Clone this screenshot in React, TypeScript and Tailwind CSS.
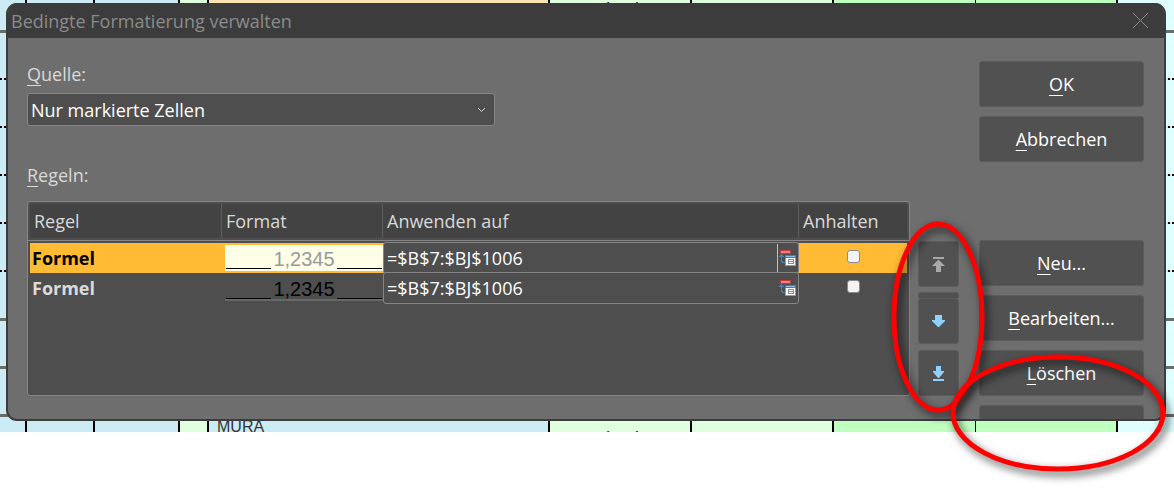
import type { ReactNode } from "react";

type RowLine = "solid" | "dotted" | "none";

interface SheetRow {
  height: string;
  line: RowLine;
  type?: string;
  amount?: string;
  name?: string;
  highlight?: boolean;
}

const sheetRows: SheetRow[] = [
  { height: "h-[33px]", line: "solid", type: "Standard", amount: "1", highlight: true },
  { height: "h-[47px]", line: "dotted" },
  { height: "h-12", line: "dotted" },
  { height: "h-12", line: "dotted" },
  { height: "h-12", line: "dotted" },
  { height: "h-12", line: "dotted" },
  { height: "h-[49px]", line: "solid" },
  { height: "h-12", line: "solid" },
  { height: "h-12", line: "solid" },
  { height: "h-[15px]", line: "none", name: "MURA", type: "Standard" },
];

const rules = [
  { id: 1, name: "Formel", preview: "1,2345", range: "=$B$7:$BJ$1006", selected: true },
  { id: 2, name: "Formel", preview: "1,2345", range: "=$B$7:$BJ$1006", selected: false },
];

const RowBorder = ({ line }: { line: RowLine }) => {
  if (line === "solid") return <div className="h-[3px] bg-[#6b6b6b]" />;
  if (line === "dotted")
    return (
      <div className="h-[2px] bg-[repeating-linear-gradient(90deg,#000_0_2px,transparent_2px_4px)]" />
    );
  return null;
};

const Sheet = () => (
  <div
    aria-hidden="true"
    className="col-start-1 row-start-1 self-start overflow-hidden bg-[#cbecf4] font-['Liberation_Sans'] text-[#333]"
  >
    {sheetRows.map((row, i) => (
      <div key={i} className={`flex flex-col overflow-hidden ${row.height}`}>
        <div className="grid min-h-0 flex-1 grid-cols-[27px_68px_85px_29px_341px_142px_142px_142px_142px_1fr]">
          <div className="border-r-2 border-black" />
          <div className="border-r-2 border-black" />
          <div className="border-r-2 border-black" />
          <div className="border-r-2 border-black bg-[#dfffdf]" />
          <div
            className={`border-r-2 border-black px-2 text-base leading-5 ${
              row.highlight ? "bg-[#fde4b0]" : ""
            }`}
          >
            {row.name}
          </div>
          <div
            className={`border-r-2 border-black bg-[#dfffdf] px-2 text-xl leading-5 ${
              row.name ? "pt-3" : ""
            }`}
          >
            {row.type}
          </div>
          <div className="border-r-2 border-black bg-[#dfffdf] px-2 text-right text-xl leading-5">
            {row.amount}
          </div>
          <div className="border-r border-black bg-[#bfffbf]" />
          <div className="border-r-2 border-black bg-[#bfffbf]" />
          <div className="bg-[#dfffff]" />
        </div>
        <RowBorder line={row.line} />
      </div>
    ))}
  </div>
);

const Mnemonic = ({ text }: { text: string }) => (
  <span>
    <span className="underline decoration-1 underline-offset-4">{text[0]}</span>
    {text.slice(1)}
  </span>
);

const DialogButton = ({ label }: { label: string }) => (
  <button
    type="button"
    className="h-[46px] w-full shrink-0 rounded-[3px] border border-[#5c5c5c] bg-[#515151] text-lg leading-6 text-white"
  >
    <Mnemonic text={label} />
  </button>
);

const MoveButton = ({ label, children }: { label: string; children: ReactNode }) => (
  <button
    type="button"
    aria-label={label}
    className="flex h-[46px] w-full shrink-0 items-center justify-center rounded-[3px] border border-[#5c5c5c] bg-[#515151]"
  >
    {children}
  </button>
);

const PickerIcon = () => (
  <svg width="17" height="17" viewBox="0 0 17 17" shapeRendering="crispEdges">
    <rect x="1" y="0" width="11" height="4" fill="#c23b40" />
    <rect x="2" y="1" width="9" height="2" fill="#f08080" />
    <path d="M2 4h1v1h1v1h1v1H3v4h1v1h2v1H3v-1H2V7H0V6h1V5h1z" fill="#3d85c0" />
    <rect x="6" y="5" width="11" height="11" fill="#979797" />
    <rect x="6" y="5" width="11" height="3" fill="#3a7fc4" />
    <rect x="7" y="6" width="9" height="1" fill="#8dbdf0" />
    <rect x="7" y="8" width="9" height="7" fill="#fff" />
    <path d="M9 9h6v5H9z" fill="#8b8b8b" />
    <path d="M10 10h4v1h-4zM10 12h4v1h-4z" fill="#fff" />
  </svg>
);

const RulesTable = () => (
  <div className="h-[195px] rounded-[3px] border border-[#858585] bg-[#4e4e4e] px-[2px] pt-[2px]">
    <table className="w-full table-fixed border-separate border-spacing-0 text-lg leading-6">
      <colgroup>
        <col className="w-[192px]" />
        <col className="w-[161px]" />
        <col />
        <col className="w-[108px]" />
      </colgroup>
      <thead>
        <tr className="h-[34px] bg-[#434343] text-left text-[#d9d9d9]">
          <th className="border-r border-[#5e5e5e] px-1 py-0 font-normal">Regel</th>
          <th className="border-r border-[#5e5e5e] px-1 py-0 font-normal">Format</th>
          <th className="border-r border-[#5e5e5e] px-1 py-0 font-normal">Anwenden auf</th>
          <th className="px-1 py-0 font-normal">Anhalten</th>
        </tr>
        <tr>
          <td colSpan={4} className="p-0">
            <div className="-mx-[2px] mt-[2px] mb-[2px] h-px bg-[#858585]" />
          </td>
        </tr>
      </thead>
      <tbody>
        {rules.map((rule) => (
          <tr
            key={rule.id}
            className={rule.selected ? "bg-[#ffbb33] text-black" : "text-[#dadada]"}
          >
            <td className="px-[2px] py-0 font-bold">{rule.name}</td>
            <td className="p-0">
              <div
                className={`ml-[3px] flex h-[26px] items-end overflow-hidden border-b-2 px-px font-['Liberation_Sans'] text-xl leading-5 ${
                  rule.selected
                    ? "border-[#ffffe8] bg-[#ffffe8] text-[#999]"
                    : "border-[#686868] text-black"
                }`}
              >
                <span className="h-px flex-1 bg-black" />
                <span className="h-5 px-[2px]">{rule.preview}</span>
                <span className="h-px flex-1 bg-black" />
              </div>
            </td>
            <td className="p-0">
              <div className="-my-px flex h-8 items-center rounded-[3px] border border-[#858585] bg-[#4e4e4e]">
                <input
                  type="text"
                  aria-label="Anwenden auf"
                  defaultValue={rule.range}
                  className="h-full min-w-0 flex-1 bg-transparent px-[3px] text-white outline-none"
                />
                <button
                  type="button"
                  aria-label="Bereich verkleinern"
                  className={`flex h-7 items-center border-l pl-px pr-[2px] ${
                    rule.selected ? "border-[#ffbb33]" : "border-transparent"
                  }`}
                >
                  <PickerIcon />
                </button>
              </div>
            </td>
            <td className="p-0">
              <div className="flex h-[30px] items-center justify-center pb-[3px]">
                <input
                  type="checkbox"
                  aria-label="Anhalten"
                  className="size-[13px] appearance-none rounded-[3px] border border-[#8a8a8a] bg-[#f4f4f4] checked:bg-[#3a7fc4]"
                />
              </div>
            </td>
          </tr>
        ))}
      </tbody>
    </table>
  </div>
);

const Dialog = () => (
  <section
    role="dialog"
    aria-labelledby="dialog-title"
    className="z-10 col-start-1 row-start-1 mt-[3px] mr-2 ml-[6px] self-start overflow-hidden rounded-[11px] border-x-2 border-b-2 border-[#3c3c3c] bg-[#6e6e6e] text-lg leading-6"
  >
    <header className="flex h-[35px] items-center justify-between bg-[#3c3c3c] pr-4 pl-[3px] text-[#8b8b8b]">
      <h1 id="dialog-title">Bedingte Formatierung verwalten</h1>
      <button type="button" aria-label="Schließen">
        <svg width="15" height="15" viewBox="0 0 15 15" fill="none" stroke="#8b8b8b">
          <path d="M0 0l15 15M15 0L0 15" />
        </svg>
      </button>
    </header>

    <div className="flex pr-5 pl-[19px]">
      <div className="flex min-w-0 flex-1 flex-col pt-6">
        <label htmlFor="source" className="text-[#d9d9d9]">
          <Mnemonic text="Quelle:" />
        </label>
        <div className="mt-[7px] grid w-[468px]">
          <select
            id="source"
            className="col-start-1 row-start-1 h-[33px] appearance-none rounded-[3px] border border-[#858585] bg-[#4e4e4e] px-[3px] text-white"
          >
            <option>Nur markierte Zellen</option>
          </select>
          <svg
            className="pointer-events-none col-start-1 row-start-1 mr-[9px] self-center justify-self-end"
            width="9"
            height="6"
            viewBox="0 0 9 6"
            fill="none"
            stroke="#d9d9d9"
          >
            <path d="M1 1l3.5 3.5L8 1" />
          </svg>
        </div>
        <h2 className="mt-[37px] mb-[14px] text-[#d9d9d9]">
          <Mnemonic text="Regeln:" />
        </h2>
        <RulesTable />
      </div>

      <div className="ml-2 flex w-[41px] flex-col justify-end pb-[23px]">
        <MoveButton label="Ganz nach oben">
          <svg width="13" height="15" viewBox="0 0 13 15" fill="#a9a9a9">
            <path d="M1 0h11v2H1zM6 3h1l6 6H9v6H4V9H0z" />
          </svg>
        </MoveButton>
        <button
          type="button"
          aria-label="Nach oben"
          className="mt-[5px] h-[6px] rounded-t-[3px] border border-b-0 border-[#5c5c5c] bg-[#515151]"
        />
        <MoveButton label="Nach unten">
          <svg width="13" height="12" viewBox="0 0 13 12" fill="#8fd0ff">
            <path d="M3 0h7v5h3v1l-6 6H6L0 6V5h3z" />
          </svg>
        </MoveButton>
        <div className="mt-[6px]">
          <MoveButton label="Ganz nach unten">
            <svg width="13" height="15" viewBox="0 0 13 15" fill="#8fd0ff">
              <path d="M4 0h5v5h3v1l-5 6H6L1 6V5h3zM1 13h11v2H1z" />
            </svg>
          </MoveButton>
        </div>
      </div>

      <div className="ml-5 flex w-[165px] flex-col gap-[9px] pt-[23px]">
        <DialogButton label="OK" />
        <DialogButton label="Abbrechen" />
        <div className="mt-[69px] flex flex-col gap-[9px]">
          <DialogButton label="Neu..." />
          <DialogButton label="Bearbeiten..." />
          <DialogButton label="Löschen" />
          <button
            type="button"
            aria-label="Hilfe"
            className="h-[14px] rounded-t-[3px] border border-b-0 border-[#5c5c5c] bg-[#515151]"
          />
        </div>
      </div>
    </div>
  </section>
);

const Marker = ({ rx, ry, className }: { rx: number; ry: number; className: string }) => (
  <svg
    aria-hidden="true"
    className={`pointer-events-none absolute z-20 overflow-visible drop-shadow-[3px_4px_4px_rgba(0,0,0,0.7)] ${className}`}
    width={rx * 2}
    height={ry * 2}
    fill="none"
    stroke="#ff0000"
    strokeWidth="5"
  >
    <ellipse cx={rx} cy={ry} rx={rx} ry={ry} />
  </svg>
);

const App = () => {
  return (
    <main className="relative grid min-h-screen grid-cols-1 content-start overflow-hidden bg-white font-['Open_Sans',sans-serif]">
      <Sheet />
      <Dialog />
      <Marker rx={44} ry={93} className="top-[224px] right-[192px]" />
      <Marker rx={105} ry={56} className="top-[357px] right-[11px]" />
    </main>
  );
};

export default App;
